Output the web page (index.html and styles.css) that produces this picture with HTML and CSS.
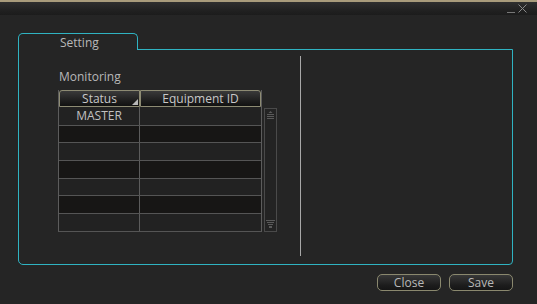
FILE: index.html
```html
<!DOCTYPE html>
<html lang="en">
  <head>
    <meta charset="UTF-8" />
    <title>Setting</title>
    <link rel="stylesheet" href="styles.css">
  </head>
  <body>
    <div class="window">
      <div class="title-bar">
        <span class="win-btn min-btn"></span>
        <svg class="win-btn close-btn" width="9" height="9" viewBox="0 0 9 9">
          <path d="M0.5 0.5 L8.5 8.5 M8.5 0.5 L0.5 8.5" stroke="#8a8a8a" stroke-width="1" fill="none" />
        </svg>
      </div>
      <div class="content">
        <div class="tab">Setting</div>
        <div class="panel">
          <div class="left-col">
            <p class="group-label">Monitoring</p>
            <div class="table-wrap">
              <div class="table">
                <div class="table-head">
                  <div class="head-cell col-status">Status<span class="sort-mark"></span></div>
                  <div class="head-cell col-id notch-right">Equipment ID</div>
                </div>
                <div class="row light"><div class="cell col-status">MASTER</div><div class="cell col-id"></div></div>
                <div class="row dark"><div class="cell col-status"></div><div class="cell col-id"></div></div>
                <div class="row light"><div class="cell col-status"></div><div class="cell col-id"></div></div>
                <div class="row dark"><div class="cell col-status"></div><div class="cell col-id"></div></div>
                <div class="row light"><div class="cell col-status"></div><div class="cell col-id"></div></div>
                <div class="row dark"><div class="cell col-status"></div><div class="cell col-id"></div></div>
                <div class="row light"><div class="cell col-status"></div><div class="cell col-id"></div></div>
              </div>
              <div class="scrollbar">
                <svg width="11" height="12" viewBox="0 0 11 12">
                  <path d="M5.5 1 L7.5 3 L3.5 3 Z" fill="#5a5a5a" />
                  <path d="M2 4.5 H9 M2 6.5 H9 M2 8.5 H9" stroke="#5a5a5a" stroke-width="1" />
                </svg>
                <svg width="11" height="12" viewBox="0 0 11 12">
                  <path d="M1 1.5 H10 M2 3.5 H9 M3 5.5 H8" stroke="#5a5a5a" stroke-width="1" />
                  <path d="M4 7 H7 V9 H4 Z" fill="#5a5a5a" />
                </svg>
              </div>
            </div>
          </div>
          <div class="divider"></div>
          <div class="right-col"></div>
        </div>
        <div class="button-row">
          <button class="dlg-button">Close</button>
          <button class="dlg-button">Save</button>
        </div>
      </div>
    </div>
  </body>
</html>
```

FILE: styles.css
```css
body {
  margin: 0;
  background: #252525;
  font-family: "Open Sans", "Liberation Sans", sans-serif;
  color: #b8b8b8;
}
.window {
  width: 537px;
  height: 304px;
  background: #252525;
  overflow: hidden;
}
.title-bar {
  height: 13px;
  border-top: 2px solid #a99c7c;
  background: linear-gradient(#2f2f2f, #202020 70%, #1c1c1c);
  display: flex;
  justify-content: flex-end;
  align-items: flex-end;
  padding-right: 10px;
  gap: 3px;
}
.min-btn {
  width: 8px;
  height: 1px;
  background: #777;
  margin-bottom: 2px;
}
.close-btn {
  margin-bottom: 2px;
}
.content {
  padding: 18px 24px 0 18px;
}
.tab {
  position: relative;
  z-index: 1;
  width: 77px;
  height: 16px;
  margin-bottom: -1px;
  padding-left: 41px;
  border: 1px solid #2fb3c2;
  border-bottom: none;
  border-radius: 5px 5px 0 0;
  background: #252525;
  font-size: 12px;
  line-height: 17px;
  color: #b8b8b8;
}
.panel {
  height: 214px;
  border: 1px solid #2fb3c2;
  border-radius: 0 0 4px 5px;
  display: flex;
  padding: 0;
}
.left-col {
  padding: 19px 0 0 39px;
}
.group-label {
  margin: 0 0 6px 1px;
  font-size: 12px;
  line-height: 15px;
  color: #b8b8b8;
}
.table-wrap {
  display: flex;
  gap: 2px;
}
.table {
  width: 202px;
  border-left: 1px solid #5c5c5c;
  border-right: 1px solid #5c5c5c;
  border-bottom: 1px solid #555;
}
.table-head {
  display: flex;
  height: 17px;
}
.head-cell {
  position: relative;
  box-sizing: border-box;
  height: 17px;
  border: 1px solid #8d8b73;
  border-radius: 3px 0 0 0;
  background: linear-gradient(#3a3a3a, #1c1c1c 70%, #111);
  font-size: 12px;
  line-height: 15px;
  text-align: center;
  color: #c8c8c8;
}
.notch-right {
  border-radius: 0 3px 0 0;
}
.head-cell.col-status {
  width: 81px;
}
.head-cell.col-id {
  width: 121px;
}
.sort-mark {
  position: absolute;
  right: 1px;
  bottom: 1px;
  width: 0;
  height: 0;
  border-left: 6px solid transparent;
  border-bottom: 6px solid #b8b8b8;
}
.row {
  display: flex;
  height: 17.7px;
  box-sizing: border-box;
  border-top: 1px solid #555;
}
.row:nth-child(2) {
  border-top: none;
}
.row.light {
  background: #222;
}
.row.dark {
  background: #171615;
}
.cell {
  font-size: 12px;
  line-height: 17px;
  text-align: center;
  color: #c0c0c0;
}
.cell.col-status {
  width: 80px;
  border-right: 1px solid #5c5c5c;
}
.cell.col-id {
  flex: 1;
}
.scrollbar {
  box-sizing: border-box;
  width: 13px;
  height: 124px;
  margin-top: 18px;
  border: 1px solid #4a4a4a;
  background: #232323;
  display: flex;
  flex-direction: column;
  justify-content: space-between;
  padding: 1px 0 0;
}
.divider {
  width: 1px;
  margin: 6px 0 8px 23px;
  background: #a8a8a8;
}
.right-col {
  flex: 1;
}
.button-row {
  display: flex;
  justify-content: flex-end;
  gap: 8px;
  margin-top: 9px;
}
.dlg-button {
  width: 64px;
  height: 17px;
  padding: 0;
  border: 1px solid #8a886e;
  border-radius: 5px;
  background: linear-gradient(#383838, #1c1c1c 70%, #151515);
  font-family: "Open Sans", "Liberation Sans", sans-serif;
  font-size: 12px;
  line-height: 15px;
  color: #b8b8b8;
}
```
